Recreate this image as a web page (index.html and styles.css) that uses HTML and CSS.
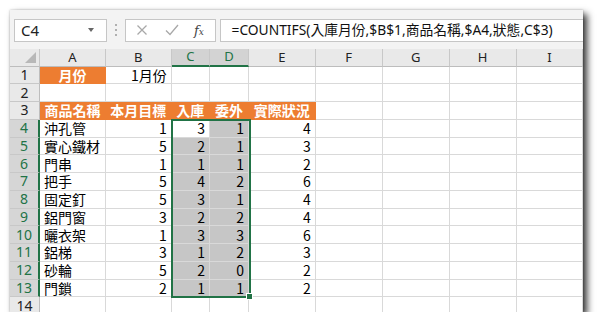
FILE: index.html
```html
<!DOCTYPE html>
<html lang="zh-Hant">
<head>
<meta charset="utf-8">
<link rel="stylesheet" href="styles.css">
</head>
<body>
<div class="window">
  <div class="toolbar">
    <div class="namebox"><span class="ref">C4</span><span class="caret"></span></div>
    <div class="dots"><svg width="4" height="14" viewBox="0 0 4 14"><circle cx="2" cy="2" r="1" fill="#9a9a9a"/><circle cx="2" cy="7" r="1" fill="#9a9a9a"/><circle cx="2" cy="12" r="1" fill="#9a9a9a"/></svg></div>
    <div class="fxbox">
      <svg class="ico" width="12" height="12" viewBox="0 0 12 12"><path d="M1.5 1.5 L10.5 10.5 M10.5 1.5 L1.5 10.5" stroke="#a8a8a8" stroke-width="1.3" fill="none"/></svg>
      <svg class="ico" width="14" height="12" viewBox="0 0 14 12"><path d="M1 6.5 L5 10.5 L13 1" stroke="#a8a8a8" stroke-width="1.3" fill="none"/></svg>
      <span class="fx">f<span class="fxsub">x</span></span>
    </div>
    <div class="formula">=COUNTIFS(入庫月份,$B$1,商品名稱,$A4,狀態,C$3)</div>
  </div>
  <div class="sheet">
    <div class="row head">
      <div class="hc corner"><span class="tri"></span></div>
      <div class="hc">A</div><div class="hc">B</div><div class="hc sel">C</div><div class="hc sel">D</div><div class="hc">E</div><div class="hc">F</div><div class="hc">G</div><div class="hc">H</div><div class="hc">I</div>
    </div>
    <div class="row">
      <div class="rn">1</div><div class="c or">月份</div><div class="c r">1月份</div><div class="c"></div><div class="c"></div><div class="c"></div><div class="c"></div><div class="c"></div><div class="c"></div><div class="c"></div>
    </div>
    <div class="row">
      <div class="rn">2</div><div class="c"></div><div class="c"></div><div class="c"></div><div class="c"></div><div class="c"></div><div class="c"></div><div class="c"></div><div class="c"></div><div class="c"></div>
    </div>
    <div class="row">
      <div class="rn">3</div><div class="c or">商品名稱</div><div class="c or">本月目標</div><div class="c or">入庫</div><div class="c or">委外</div><div class="c or">實際狀況</div><div class="c"></div><div class="c"></div><div class="c"></div><div class="c"></div>
    </div>
    <div class="row">
      <div class="rn sel">4</div><div class="c">沖孔管</div><div class="c r">1</div><div class="c r">3</div><div class="c r g">1</div><div class="c r">4</div><div class="c"></div><div class="c"></div><div class="c"></div><div class="c"></div>
    </div>
    <div class="row">
      <div class="rn sel">5</div><div class="c">實心鐵材</div><div class="c r">5</div><div class="c r g">2</div><div class="c r g">1</div><div class="c r">3</div><div class="c"></div><div class="c"></div><div class="c"></div><div class="c"></div>
    </div>
    <div class="row">
      <div class="rn sel">6</div><div class="c">門串</div><div class="c r">1</div><div class="c r g">1</div><div class="c r g">1</div><div class="c r">2</div><div class="c"></div><div class="c"></div><div class="c"></div><div class="c"></div>
    </div>
    <div class="row">
      <div class="rn sel">7</div><div class="c">把手</div><div class="c r">5</div><div class="c r g">4</div><div class="c r g">2</div><div class="c r">6</div><div class="c"></div><div class="c"></div><div class="c"></div><div class="c"></div>
    </div>
    <div class="row">
      <div class="rn sel">8</div><div class="c">固定釘</div><div class="c r">5</div><div class="c r g">3</div><div class="c r g">1</div><div class="c r">4</div><div class="c"></div><div class="c"></div><div class="c"></div><div class="c"></div>
    </div>
    <div class="row">
      <div class="rn sel">9</div><div class="c">鋁門窗</div><div class="c r">3</div><div class="c r g">2</div><div class="c r g">2</div><div class="c r">4</div><div class="c"></div><div class="c"></div><div class="c"></div><div class="c"></div>
    </div>
    <div class="row">
      <div class="rn sel">10</div><div class="c">曬衣架</div><div class="c r">1</div><div class="c r g">3</div><div class="c r g">3</div><div class="c r">6</div><div class="c"></div><div class="c"></div><div class="c"></div><div class="c"></div>
    </div>
    <div class="row">
      <div class="rn sel">11</div><div class="c">鋁梯</div><div class="c r">3</div><div class="c r g">1</div><div class="c r g">2</div><div class="c r">3</div><div class="c"></div><div class="c"></div><div class="c"></div><div class="c"></div>
    </div>
    <div class="row">
      <div class="rn sel">12</div><div class="c">砂輪</div><div class="c r">5</div><div class="c r g">2</div><div class="c r g">0</div><div class="c r">2</div><div class="c"></div><div class="c"></div><div class="c"></div><div class="c"></div>
    </div>
    <div class="row">
      <div class="rn sel">13</div><div class="c">門鎖</div><div class="c r">2</div><div class="c r g">1</div><div class="c r g">1</div><div class="c r">2</div><div class="c"></div><div class="c"></div><div class="c"></div><div class="c"></div>
    </div>
    <div class="row">
      <div class="rn">14</div><div class="c"></div><div class="c"></div><div class="c"></div><div class="c"></div><div class="c"></div><div class="c"></div><div class="c"></div><div class="c"></div><div class="c"></div>
    </div>
    <div class="selection"><span class="handle"></span></div>
  </div>
</div>
</body>
</html>
```

FILE: styles.css
```css
html, body {
  margin: 0;
  padding: 0;
  background: #ffffff;
}

body {
  font-family: "Noto Sans", "Noto Sans CJK TC", sans-serif;
  color: #000;
}

.window {
  position: relative;
  margin: 10px 0 0 10px;
  width: 573px;
  height: 302px;
  background: #ffffff;
  overflow: hidden;
  box-shadow: 4px 4px 7px rgba(0, 0, 0, 0.8), 0 0 2px rgba(0, 0, 0, 0.25);
}

.toolbar {
  height: 39px;
  box-sizing: border-box;
  background: #f3f3f3;
  display: flex;
  align-items: center;
  padding: 1px 0 0 4px;
}

.namebox {
  width: 93px;
  height: 23px;
  box-sizing: border-box;
  background: #fff;
  border: 1px solid #c6c6c6;
  display: flex;
  align-items: center;
  justify-content: space-between;
  padding: 0 12px 0 6px;
  font-size: 15px;
  line-height: 1;
  color: #222;
}

.caret {
  width: 0;
  height: 0;
  border-left: 3.5px solid transparent;
  border-right: 3.5px solid transparent;
  border-top: 4px solid #666;
}

.dots {
  width: 18px;
  display: flex;
  justify-content: center;
  align-items: center;
  height: 23px;
}

.fxbox {
  width: 91px;
  height: 23px;
  box-sizing: border-box;
  background: #fff;
  border: 1px solid #c6c6c6;
  display: flex;
  align-items: center;
  padding: 0 0 0 10px;
  gap: 17px;
}

.fx {
  font-family: "DejaVu Serif", "Liberation Serif", serif;
  font-style: italic;
  font-size: 13px;
  line-height: 1;
  color: #444;
  margin-left: -2px;
}

.fxsub {
  font-size: 9px;
}

.formula {
  flex: 1;
  height: 23px;
  box-sizing: border-box;
  margin-left: 3.5px;
  background: #fff;
  border: 1px solid #c6c6c6;
  border-right: none;
  display: flex;
  align-items: center;
  padding-left: 11px;
  font-size: 13.8px;
  line-height: 1;
  color: #111;
  white-space: nowrap;
}

.sheet {
  position: relative;
}

.row {
  display: grid;
  grid-template-columns: 30px 66px 65.7px 38.3px 39px 66.7px 67px 67px 67px 1fr;
  height: 17.75px;
}

.row.head {
  height: 17.5px;
}

.hc {
  background: #e9e9e9;
  border-right: 1px solid #c8c8c8;
  border-bottom: 1px solid #bdbdbd;
  box-sizing: border-box;
  display: flex;
  align-items: center;
  justify-content: center;
  font-size: 13px;
  line-height: 1;
  color: #222;
}

.hc.sel {
  background: #d3d3d3;
  color: #217346;
  border-bottom: 2px solid #217346;
}

.corner {
  position: relative;
}

.tri {
  position: absolute;
  right: 3px;
  bottom: 3px;
  width: 0;
  height: 0;
  border-left: 11px solid transparent;
  border-bottom: 11px solid #b8b8b8;
}

.rn {
  background: #e9e9e9;
  border-right: 1px solid #bdbdbd;
  border-bottom: 1px solid #c8c8c8;
  box-sizing: border-box;
  display: flex;
  align-items: center;
  justify-content: center;
  font-size: 14px;
  line-height: 1;
  color: #222;
}

.rn.sel {
  background: #d6d6d6;
  color: #217346;
  border-right: 2px solid #217346;
}

.c {
  border-right: 1px solid #d9d9d9;
  border-bottom: 1px solid #d9d9d9;
  box-sizing: border-box;
  display: flex;
  align-items: center;
  padding: 0 4px;
  font-family: "Noto Sans CJK TC", "Noto Sans", sans-serif;
  font-size: 14px;
  line-height: 1;
  white-space: nowrap;
}

.c.r {
  justify-content: flex-end;
}

.c.g {
  background: #c6c6c6;
}

.c.or {
  background: #ed7d31;
  border-color: #ed7d31;
  color: #fff;
  font-weight: bold;
  justify-content: center;
}

.selection {
  position: absolute;
  left: 160.7px;
  top: 69.75px;
  width: 80.3px;
  height: 179.5px;
  box-sizing: border-box;
  border: 2px solid #217346;
  pointer-events: none;
}

.handle {
  position: absolute;
  right: -4px;
  bottom: -4px;
  width: 5px;
  height: 5px;
  background: #217346;
  border: 1px solid #fff;
}
```
